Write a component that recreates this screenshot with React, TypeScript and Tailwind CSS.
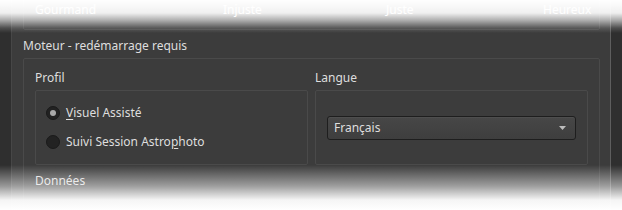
import React from "react";

interface RadioProps {
  label: React.ReactNode;
  checked?: boolean;
}

const Radio: React.FC<RadioProps> = ({ label, checked }) => (
  <div className="flex h-[29px] items-center">
    <span className="flex h-[14px] w-[14px] items-center justify-center rounded-full border border-[#1a1a1a] bg-[#222222]">
      {checked ? (
        <span className="h-[6px] w-[6px] rounded-full bg-[#a9a9a9]" />
      ) : null}
    </span>
    <span className="ml-[6px]">{label}</span>
  </div>
);

const GroupBox: React.FC<{ className?: string; children?: React.ReactNode }> = ({
  className = "",
  children,
}) => (
  <div className={`rounded-[2px] border border-[#4a4a4a] ${className}`}>
    {children}
  </div>
);

const App: React.FC = () => {
  return (
    <div className="relative h-[210px] w-[622px] overflow-hidden bg-[#2f2f2f] font-['Noto_Sans',sans-serif] text-[12px] leading-[18px] text-[#dedede]">
      <div className="ml-[11px] h-full w-[600px] border-l border-[#474747] bg-[#3c3c3c]">
        <div className="flex h-full w-[599px] border-r border-[#5e5e5e]">
          <div className="w-[588px] pl-[11px]">
            {/* previous section, mostly faded out */}
            <div className="-mt-[10px] h-[40px] rounded-[2px] border border-[#4a4a4a]">
              <div className="flex pl-[11px] pt-[10px] text-[#ffffff]">
                <span className="w-[188px]">Gourmand</span>
                <span className="w-[163px]">Injuste</span>
                <span className="w-[157px]">Juste</span>
                <span>Heureux</span>
              </div>
            </div>

            <div className="mt-[7px] h-[18px]">Moteur - redémarrage requis</div>

            <GroupBox className="mt-[3px] h-[200px] px-[11px] pt-[10px]">
              <div className="grid grid-cols-[273px_273px] gap-x-[7px]">
                <div>
                  <div className="h-[18px]">Profil</div>
                  <GroupBox className="mt-[3px] h-[75px] px-[10px] pt-[7px]">
                    <Radio
                      checked
                      label={
                        <>
                          <span className="underline underline-offset-2">V</span>isuel Assisté
                        </>
                      }
                    />
                    <Radio
                      label={
                        <>
                          Suivi Session Astro
                          <span className="underline underline-offset-2">p</span>hoto
                        </>
                      }
                    />
                  </GroupBox>
                </div>
                <div>
                  <div className="h-[18px]">Langue</div>
                  <GroupBox className="mt-[3px] flex h-[75px] items-center px-[11px]">
                    <div className="flex h-[24px] w-full items-center justify-between rounded-[3px] border border-[#1e1e1e] bg-gradient-to-b from-[#474747] to-[#3e3e3e] pl-[6px] pr-[9px] shadow-[inset_0_1px_0_#4e4e4e]">
                      <span>Français</span>
                      <svg width="7" height="4" viewBox="0 0 7 4">
                        <path d="M0 0 L7 0 L3.5 4 Z" fill="#bdbdbd" />
                      </svg>
                    </div>
                  </GroupBox>
                </div>
              </div>
              <div className="mt-[7px] h-[18px]">Données</div>
            </GroupBox>
          </div>
        </div>
      </div>

      {/* torn screenshot fades */}
      <div className="pointer-events-none absolute inset-x-0 top-0 h-[34px] bg-[linear-gradient(to_bottom,rgba(255,255,255,1)_0px,rgba(255,255,255,0.97)_6px,rgba(255,255,255,0.92)_13px,rgba(255,255,255,0.55)_21px,rgba(255,255,255,0.15)_28px,rgba(255,255,255,0)_33px)]" />
      <div className="pointer-events-none absolute inset-x-0 bottom-0 h-[45px] bg-[linear-gradient(to_top,rgba(255,255,255,1)_0px,rgba(255,255,255,0.95)_10px,rgba(255,255,255,0.5)_24px,rgba(255,255,255,0)_45px)]" />
    </div>
  );
};

export default App;
